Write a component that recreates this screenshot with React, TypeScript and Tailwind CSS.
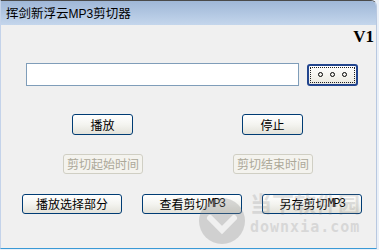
import { type ReactNode } from 'react'

const cjk = "font-['SimSun','Noto_Sans_CJK_SC','Liberation_Sans',sans-serif]"

// XP style push button
function Btn({ children, w, h = 'h-[21px]' }: { children: ReactNode; w: string; h?: string }) {
  return (
    <button
      className={`${w} ${h} shrink-0 rounded-[3px] border border-[#003c74] bg-gradient-to-b from-[#ffffff] via-[#f4f4f0] to-[#e3e2da] text-[12px] leading-none text-black flex items-center justify-center ${cjk}`}
    >
      {children}
    </button>
  )
}

function DisabledBtn({ children }: { children: ReactNode }) {
  return (
    <button
      className={`w-[80px] h-[20px] shrink-0 rounded-[3px] border border-[#d0cfc4] bg-[#f4f3ee] text-[12px] leading-none text-[#aca899] flex items-center justify-center ${cjk}`}
    >
      {children}
    </button>
  )
}

function Mp3({ children }: { children: ReactNode }) {
  return <span className="font-['Liberation_Mono',monospace] text-[12px] tracking-[-1.5px]">{children}</span>
}

export default function App() {
  return (
    <div className="relative w-[379px] h-[250px] overflow-hidden bg-[#eaf0f8]">
      <div className="w-[377px] h-[249px] flex flex-col border-l border-r border-b border-l-[#c4d3ea] border-r-[#b8c8e0] border-b-[#3a9ad6] rounded-tr-[6px] overflow-hidden border-t border-t-[#4a4a4a]">
        {/* Title bar */}
        <div className="h-[24px] shrink-0 bg-gradient-to-b from-[#9fb7d7] to-[#c4d6ec] flex items-center pl-[5px]">
          <span className={`text-[12.5px] text-black ${cjk}`}>
            挥剑新浮云<span className="font-['Liberation_Sans',sans-serif] text-[12px]">MP3</span>剪切器
          </span>
        </div>

        {/* Body */}
        <div className="flex-1 bg-[#f0f0f0] flex flex-col">
          <div className="h-[38px] flex justify-end pr-[2px]">
            <span className="font-['Liberation_Serif',serif] font-bold text-[17px] leading-none mt-[3px] text-black">V1</span>
          </div>

          <div className="flex items-center pl-[25px] gap-[8px] h-[23px]">
            <div className="w-[273px] h-[23px] border border-[#7f9db9] bg-white" />
            <button className="w-[51px] h-[22px] rounded-[3px] border-2 border-[#22458e] bg-gradient-to-b from-[#ffffff] to-[#ebe9e0] p-[1px]">
              <div className="w-full h-full border border-dotted border-[#222] flex items-center justify-center gap-[7px]">
                <span className="w-[5px] h-[5px] rounded-full border border-black" />
                <span className="w-[5px] h-[5px] rounded-full border border-black" />
                <span className="w-[5px] h-[5px] rounded-full border border-black" />
              </div>
            </button>
          </div>

          <div className="flex pl-[71px] gap-[109px] mt-[28px]">
            <Btn w="w-[61px]">播放</Btn>
            <Btn w="w-[61px]">停止</Btn>
          </div>

          <div className="flex pl-[62px] gap-[90px] mt-[19px]">
            <DisabledBtn>剪切起始时间</DisabledBtn>
            <DisabledBtn>剪切结束时间</DisabledBtn>
          </div>

          <div className="flex pl-[21px] gap-[20px] mt-[20px]">
            <Btn w="w-[100px]" h="h-[20px]">播放选择部分</Btn>
            <Btn w="w-[100px]" h="h-[20px]">查看剪切<Mp3>MP3</Mp3></Btn>
            <Btn w="w-[100px]" h="h-[20px]">另存剪切<Mp3>MP3</Mp3></Btn>
          </div>
        </div>
      </div>

      {/* Watermark */}
      <div className="absolute left-[197px] top-[194px] pointer-events-none opacity-30">
        <svg width="50" height="52" viewBox="0 0 50 52">
          <circle cx="25" cy="27" r="23" fill="#8a8a8a" />
          <path d="M13 24 L25 36 L37 24" stroke="#f0f0f0" strokeWidth="6" fill="none" strokeLinecap="round" />
        </svg>
      </div>
      <div className="absolute left-[250px] top-[191px] pointer-events-none opacity-20 flex flex-col">
        <span className={`text-[22px] font-bold leading-none text-[#777] ${cjk}`}>当下软件园</span>
        <span className="font-['DejaVu_Sans_Mono',monospace] font-bold text-[15px] leading-none mt-[7px] text-[#777] tracking-[1px]">downxia.com</span>
      </div>
    </div>
  )
}
